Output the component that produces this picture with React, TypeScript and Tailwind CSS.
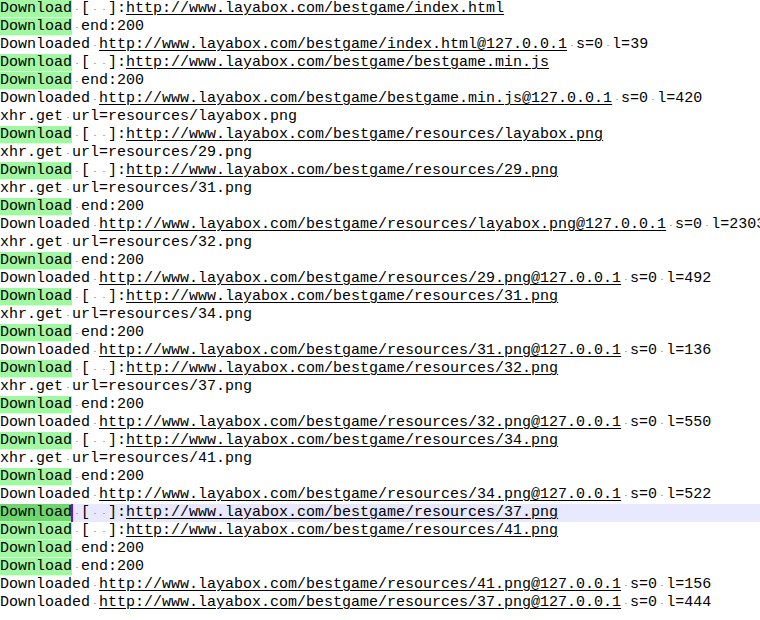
import React from "react";

const BASE = "http://www.layabox.com/bestgame/";

type Line =
  | { kind: "start"; url: string }
  | { kind: "end" }
  | { kind: "done"; url: string; size: number }
  | { kind: "xhr"; file: string };

const LINES: Line[] = [
  { kind: "start", url: BASE + "index.html" },
  { kind: "end" },
  { kind: "done", url: BASE + "index.html", size: 39 },
  { kind: "start", url: BASE + "bestgame.min.js" },
  { kind: "end" },
  { kind: "done", url: BASE + "bestgame.min.js", size: 420 },
  { kind: "xhr", file: "layabox.png" },
  { kind: "start", url: BASE + "resources/layabox.png" },
  { kind: "xhr", file: "29.png" },
  { kind: "start", url: BASE + "resources/29.png" },
  { kind: "xhr", file: "31.png" },
  { kind: "end" },
  { kind: "done", url: BASE + "resources/layabox.png", size: 2303 },
  { kind: "xhr", file: "32.png" },
  { kind: "end" },
  { kind: "done", url: BASE + "resources/29.png", size: 492 },
  { kind: "start", url: BASE + "resources/31.png" },
  { kind: "xhr", file: "34.png" },
  { kind: "end" },
  { kind: "done", url: BASE + "resources/31.png", size: 136 },
  { kind: "start", url: BASE + "resources/32.png" },
  { kind: "xhr", file: "37.png" },
  { kind: "end" },
  { kind: "done", url: BASE + "resources/32.png", size: 550 },
  { kind: "start", url: BASE + "resources/34.png" },
  { kind: "xhr", file: "41.png" },
  { kind: "end" },
  { kind: "done", url: BASE + "resources/34.png", size: 522 },
  { kind: "start", url: BASE + "resources/37.png" },
  { kind: "start", url: BASE + "resources/41.png" },
  { kind: "end" },
  { kind: "end" },
  { kind: "done", url: BASE + "resources/41.png", size: 156 },
  { kind: "done", url: BASE + "resources/37.png", size: 444 },
];

const ACTIVE = 28;

// visible whitespace: one char cell with a small orange dot
function Sp({ n = 1 }: { n?: number }) {
  return (
    <>
      {Array.from({ length: n }).map((_, i) => (
        <span key={i} className="relative inline-block w-[9px] h-[18px] align-top">
          <span className="absolute left-[4px] top-[9px] w-[2px] h-[1px] bg-[#f7a541]" />
        </span>
      ))}
    </>
  );
}

function Tag({ active }: { active: boolean }) {
  return (
    <span
      className={`inline-block h-[17px] leading-[17px] align-top ${
        active ? "bg-[#6fd66f]" : "bg-[#a2f7a2]"
      }`}
    >
      Download
    </span>
  );
}

function Url({ children }: { children: React.ReactNode }) {
  return <span className="underline underline-offset-[2px] decoration-1">{children}</span>;
}

function Row({ line, active }: { line: Line; active: boolean }) {
  let body: React.ReactNode;
  if (line.kind === "start") {
    body = (
      <>
        <Tag active={active} />
        {active && <span className="inline-block w-[2px] h-[18px] -ml-[1px] -mr-[1px] bg-[#8000ff] align-top" />}
        <Sp />[<Sp n={2} />]:<Url>{line.url}</Url>
      </>
    );
  } else if (line.kind === "end") {
    body = (
      <>
        <Tag active={active} />
        <Sp />end:200
      </>
    );
  } else if (line.kind === "done") {
    body = (
      <>
        Downloaded<Sp />
        <Url>{line.url + "@127.0.0.1"}</Url>
        <Sp />s=0<Sp />l={line.size}
      </>
    );
  } else {
    body = (
      <>
        xhr.get<Sp />url=resources/{line.file}
      </>
    );
  }
  return (
    <div className={`h-[18px] leading-[18px] whitespace-pre ${active ? "bg-[#e8e8ff]" : ""}`}>
      {body}
    </div>
  );
}

export default function App() {
  return (
    <div className="w-[760px] h-[620px] overflow-hidden bg-white text-black text-[15px] font-['Liberation_Mono','Courier_New',monospace]">
      {LINES.map((line, i) => (
        <Row key={i} line={line} active={i === ACTIVE} />
      ))}
    </div>
  );
}
